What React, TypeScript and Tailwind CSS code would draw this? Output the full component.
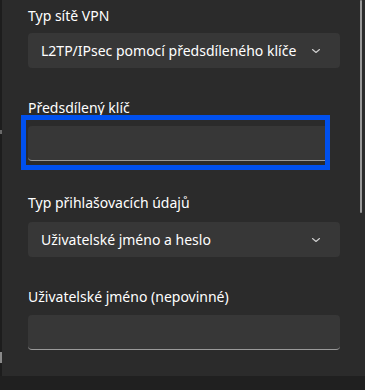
import React from "react";

function Chevron() {
  return (
    <svg width="10" height="6" viewBox="0 0 10 6" className="shrink-0">
      <path d="M1.5 1.5 L5 4.5 L8.5 1.5" fill="none" stroke="#cfcfcf" strokeWidth="1.1" strokeLinecap="round" strokeLinejoin="round" />
    </svg>
  );
}

function Select({ text, className }: { text: string; className?: string }) {
  return (
    <div
      className={
        "flex h-[35px] w-[312px] items-center justify-between rounded-[4px] bg-[#373737] pl-[13px] pr-[19px] text-[14px] text-white " +
        (className ?? "")
      }
    >
      <span>{text}</span>
      <Chevron />
    </div>
  );
}

export default function App() {
  return (
    <div
      className="relative h-[390px] w-[365px] overflow-hidden bg-[#2b2b2b] text-white"
      style={{ fontFamily: "'Noto Sans', sans-serif" }}
    >
      {/* left edge of a window behind */}
      <div className="absolute left-0 top-0 h-full w-[2px] bg-[#1d1d1d]" />
      <div className="absolute left-0 top-[130px] h-[4px] w-[2px] bg-[#6a6a6a]" />
      <div className="absolute left-0 top-[352px] h-[11px] w-[2px] bg-[#8a8a8a]" />

      <div className="flex flex-col pl-[28px] pt-[6px]">
        <div className="text-[14px] leading-[20px]">Typ sítě VPN</div>
        <Select className="mt-[7px]" text="L2TP/IPsec pomocí předsdíleného klíče" />

        <div className="mt-[30px] text-[14px] leading-[20px]">Předsdílený klíč</div>
        <div className="mt-[8px] h-[35px] w-[297px] rounded-l-[4px] border-b border-[#9a9a9a] bg-[#373737]" />

        <div className="mt-[32px] text-[14px] leading-[20px]">Typ přihlašovacích údajů</div>
        <Select className="mt-[9px]" text="Uživatelské jméno a heslo" />

        <div className="mt-[30px] text-[14px] leading-[20px]">Uživatelské jméno (nepovinné)</div>
        <div className="mt-[8px] h-[35px] w-[312px] rounded-[4px] border-b border-[#9a9a9a] bg-[#373737]" />
      </div>

      {/* focus highlight annotation */}
      <div className="absolute left-[21px] top-[115px] h-[55px] w-[309px] border-[5px] border-[#0050ee]" />

      {/* scrollbar */}
      <div className="absolute right-[3px] top-0 h-[213px] w-[2px] rounded-full bg-[#9a9a9a]" />

      {/* bottom bar */}
      <div className="absolute bottom-0 left-0 h-[14px] w-full bg-[#202020]" />
    </div>
  );
}
